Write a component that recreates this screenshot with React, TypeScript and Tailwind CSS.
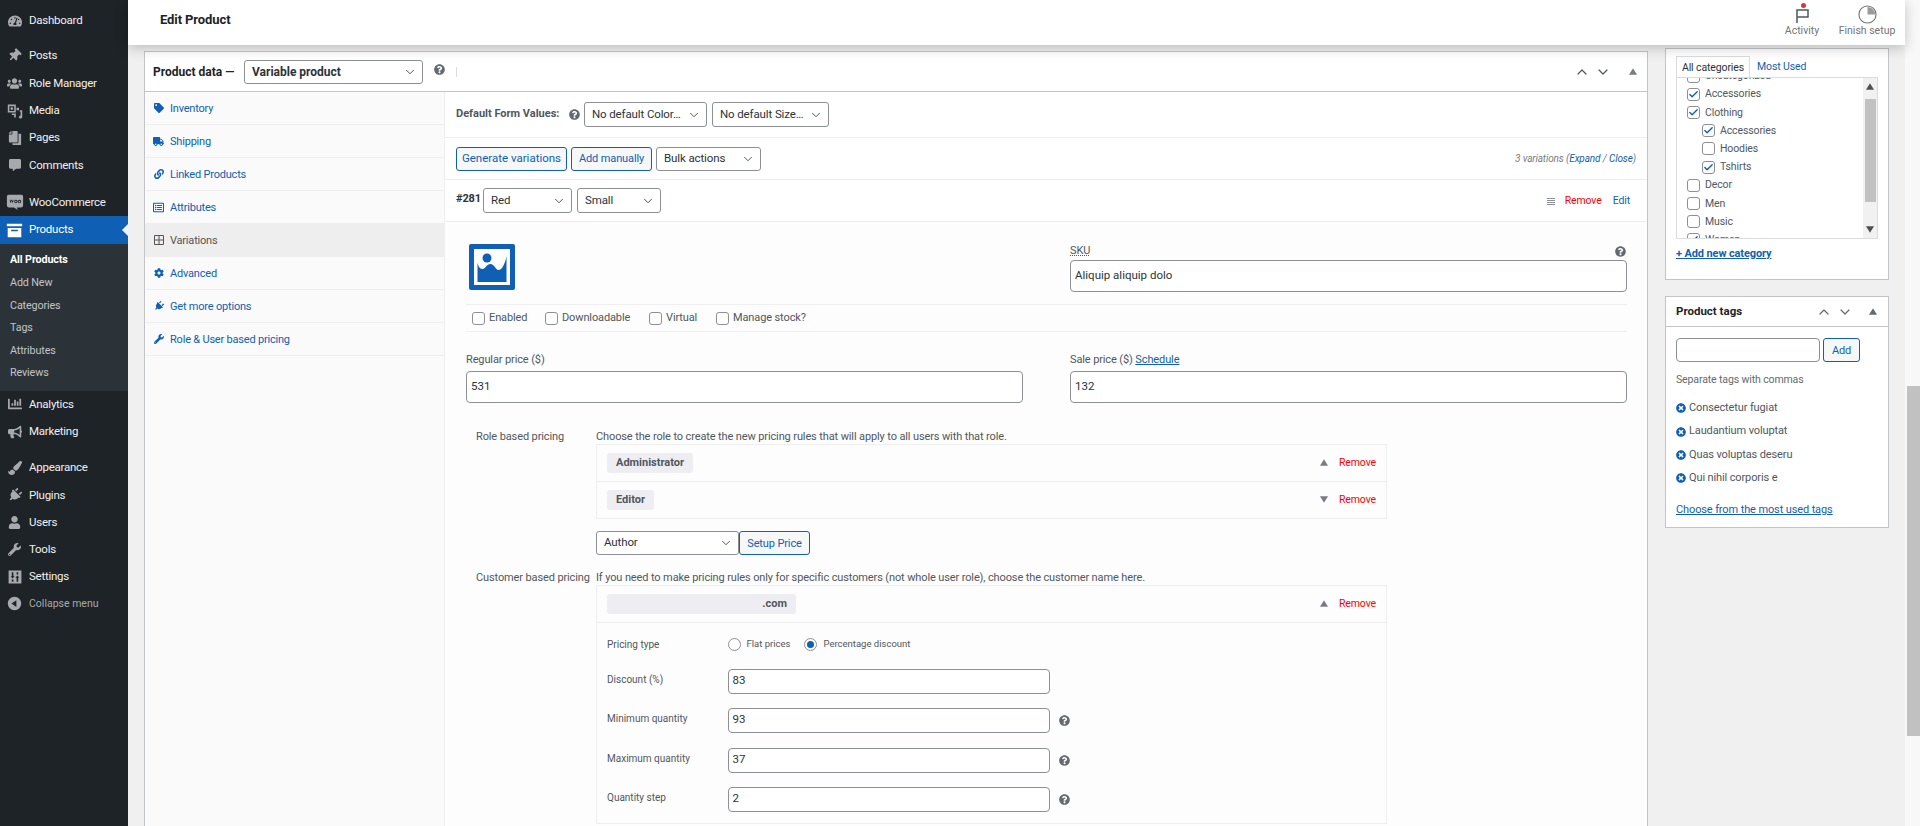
import React from 'react';
import { FaTachometerAlt, FaThumbtack, FaUsers, FaCopy, FaCommentAlt, FaChartBar, FaBullhorn, FaPaintBrush, FaPlug, FaUser, FaWrench, FaTag, FaTruck, FaLink, FaRegListAlt, FaCog, FaQuestionCircle, FaTimesCircle } from 'react-icons/fa';
import { ChevronDown, ChevronUp, Check } from 'lucide-react';

const font = 'font-["Roboto",sans-serif]';

const Tri = ({ down = false, cls = '' }: { down?: boolean; cls?: string }) => (
  <svg viewBox="0 0 10 8" className={`w-[8px] h-[7px] ${cls}`} fill="currentColor">
    <path d={down ? 'M0 0h10L5 8z' : 'M5 0l5 8H0z'} />
  </svg>
);

const Help = ({ cls = '' }: { cls?: string }) => <FaQuestionCircle className={`w-[11px] h-[11px] text-[#646970] ${cls}`} />;

const MediaIcon = () => (
  <svg viewBox="0 0 20 20" className="w-[16px] h-[16px]" fill="currentColor">
    <path d="M1 2h10v10H1zM3 4v6h6V4zM6 5.2a1.8 1.8 0 1 1 0 3.6 1.8 1.8 0 0 1 0-3.6zM12 6h3v3h-3zM6 13h5v5H9v-3H6zM16 9h3v8.500a2 2 0 1 1-2-2V11h-1z" fillRule="evenodd" />
  </svg>
);

const ArchiveIcon = () => (
  <svg viewBox="0 0 20 20" className="w-[17px] h-[17px]" fill="currentColor">
    <path d="M1 2h18v3H1zM2 7h16v11H2zM6 9v2h8V9z" fillRule="evenodd" />
  </svg>
);

const WooIcon = () => (
  <svg viewBox="0 0 20 20" className="w-[18px] h-[18px]" fill="currentColor">
    <path d="M3 2h14a2 2 0 0 1 2 2v10a2 2 0 0 1-2 2h-5l1 3-4-3H3a2 2 0 0 1-2-2V4a2 2 0 0 1 2-2zM4 7.500l1 4 1.300-3 1.200 3 1-4H7.600l-.3 1.800L6.500 7.500h-.4L5.300 9.300 5 7.500zM11 7.500a1.900 1.900 0 1 0 .01 0zM11 8.500a.9.9 0 1 1-.01 0zM15 7.500a1.900 1.900 0 1 0 .01 0zM15 8.500a.9.9 0 1 1-.01 0z" fillRule="evenodd" />
  </svg>
);

const SettingsIcon = () => (
  <svg viewBox="0 0 20 20" className="w-[16px] h-[16px]" fill="currentColor">
    <path d="M2 2h16v16H2zM6 4v5H4.500L7 12l2.500-3H8V4zM6 13v3h2v-3zM12 4v3h2V4zM13 8l-2.500 3H12v5h2v-5h1.500z" fillRule="evenodd" />
  </svg>
);

const CollapseIcon = () => (
  <svg viewBox="0 0 20 20" className="w-[15px] h-[15px]" fill="currentColor">
    <path d="M10 1a9 9 0 1 1 0 18 9 9 0 0 1 0-18zM12.500 5.500L6 10l6.500 4.500z" fillRule="evenodd" />
  </svg>
);

const GridIcon = () => (
  <svg viewBox="0 0 10 10" className="w-[10px] h-[10px]" fill="none" stroke="currentColor" strokeWidth="1">
    <path d="M.5.500h9v9h-9zM5 .5v9M.5 5h9" />
  </svg>
);

const ImageHolder = () => (
  <div className="w-[46px] h-[46px] rounded-[2px] bg-[#0f5fb5] p-[5px]">
    <div className="w-full h-full bg-white p-[2px]">
      <svg viewBox="0 0 32 32" className="w-full h-full" fill="#0f5fb5">
        <circle cx="11" cy="7" r="4.500" />
        <path d="M1.500 12c1 3 2 6 5 6 3 0 4-5 8-5 4 0 5 6 8 6 4 0 7-8 8-14v26H1.500z" />
      </svg>
    </div>
  </div>
);

const Select = ({ label, cls }: { label: string; cls: string }) => (
  <div className={`flex items-center justify-between bg-white border border-[#8c8f94] rounded-[3px] pl-[7px] pr-[5px] text-[#2c3338] text-[11.500px] ${cls}`}>
    <span className="whitespace-nowrap">{label}</span>
    <ChevronDown className="w-[14px] h-[14px] shrink-0 text-[#50575e]" strokeWidth={1.7} />
  </div>
);

const Btn = ({ label, cls }: { label: string; cls: string }) => (
  <div className={`flex items-center justify-center bg-[#f6f7f7] border border-[#0f5fb5] rounded-[3px] text-[#0f5fb5] leading-none ${cls}`}>{label}</div>
);

const Field = ({ value, cls }: { value: string; cls: string }) => (
  <div className={`flex items-center bg-white border border-[#8c8f94] rounded-[4px] px-[4px] text-[#2c3338] text-[11.500px] tracking-normal leading-none ${cls}`}>{value}</div>
);

const Box = ({ checked = false }: { checked?: boolean }) => (
  <span className="flex items-center justify-center w-[13px] h-[13px] shrink-0 bg-white border border-[#8c8f94] rounded-[3px]">
    {checked && <Check className="w-[11px] h-[11px] text-[#0f5fb5]" strokeWidth={3} />}
  </span>
);

const MenuItem = ({ icon, label, cls = '' }: { icon: React.ReactNode; label: string; cls?: string }) => (
  <div className={`flex items-center h-[27.3px] text-[#f0f0f1] text-[11.500px] tracking-[-0.25px] ${cls}`}>
    <span className="flex justify-center w-[29px] text-[#a7aaad]">{icon}</span>
    <span>{label}</span>
  </div>
);

const Sub = ({ label, bold = false }: { label: string; bold?: boolean }) => (
  <div className={`flex items-center h-[22.6px] pl-[10px] text-[10.750px] ${bold ? 'font-bold text-white' : 'text-[#c3c4c7]'}`}>{label}</div>
);

const Sidebar = () => (
  <aside className="w-[128px] shrink-0 bg-[#1d2327] flex flex-col pt-[7px]">
    <MenuItem icon={<FaTachometerAlt className="w-[14px] h-[14px]" />} label="Dashboard" />
    <div className="h-[8px]" />
    <MenuItem icon={<FaThumbtack className="w-[13px] h-[13px] rotate-45" />} label="Posts" />
    <MenuItem icon={<FaUsers className="w-[15px] h-[15px]" />} label="Role Manager" />
    <MenuItem icon={<MediaIcon />} label="Media" />
    <MenuItem icon={<FaCopy className="w-[14px] h-[14px] -scale-x-100" />} label="Pages" />
    <MenuItem icon={<FaCommentAlt className="w-[12px] h-[12px]" />} label="Comments" />
    <div className="h-[10px]" />
    <MenuItem icon={<WooIcon />} label="WooCommerce" />
    <div className="relative flex items-center h-[28px] bg-[#0f5fb5] text-white text-[11.500px] tracking-[-0.25px]">
      <span className="flex justify-center w-[29px] text-white"><ArchiveIcon /></span>
      <span>Products</span>
      <span className="absolute right-0 top-[8px] border-y-[6px] border-y-transparent border-r-[6px] border-r-[#f0f0f1]" />
    </div>
    <div className="bg-[#2c3338] pt-[5px] pb-[6px]">
      <Sub label="All Products" bold />
      <Sub label="Add New" />
      <Sub label="Categories" />
      <Sub label="Tags" />
      <Sub label="Attributes" />
      <Sub label="Reviews" />
    </div>
    <MenuItem icon={<FaChartBar className="w-[14px] h-[14px]" />} label="Analytics" />
    <MenuItem icon={<FaBullhorn className="w-[14px] h-[14px]" />} label="Marketing" />
    <div className="h-[9px]" />
    <MenuItem icon={<FaPaintBrush className="w-[14px] h-[14px]" />} label="Appearance" />
    <MenuItem icon={<FaPlug className="w-[14px] h-[14px] rotate-45" />} label="Plugins" />
    <MenuItem icon={<FaUser className="w-[13px] h-[13px]" />} label="Users" />
    <MenuItem icon={<FaWrench className="w-[13px] h-[13px]" />} label="Tools" />
    <MenuItem icon={<SettingsIcon />} label="Settings" />
    <div className="flex items-center h-[26px] text-[#a7aaad] text-[10.500px] tracking-normal">
      <span className="flex justify-center w-[29px]"><CollapseIcon /></span>
      <span>Collapse menu</span>
    </div>
  </aside>
);

const Header = () => (
  <header className="relative z-10 flex items-start justify-between h-[45px] bg-white shadow-[0_3px_12px_rgba(0,0,0,0.22)] pl-[32px] pr-[9px]">
    <h1 className="mt-[12px] text-[13px] tracking-[-0.1px] leading-[16px] font-bold text-[#1d2327]">Edit Product</h1>
    <div className="flex gap-[17px] mt-[5px] text-[#757575] text-[10.500px] tracking-normal whitespace-nowrap">
      <div className="flex flex-col items-center w-[38px]">
        <span className="relative h-[18px]">
          <svg viewBox="0 0 13 16" className="w-[13px] h-[16px] mt-[2px]" fill="none" stroke="#50575e" strokeWidth="1.500">
            <path d="M1 16V3h11v7H1" />
          </svg>
          <span className="absolute -top-[2px] left-[5px] w-[5px] h-[5px] rounded-full bg-[#d63638]" />
        </span>
        <span className="leading-[13px] mt-[1px]">Activity</span>
      </div>
      <div className="flex flex-col items-center w-[58px]">
        <svg viewBox="0 0 20 20" className="w-[19px] h-[19px]" fill="none" stroke="#757575" strokeWidth="1.200">
          <circle cx="10" cy="10" r="9" />
          <path d="M10 2v8h8a8 8 0 0 0-8-8z" fill="#9a9a9a" stroke="none" />
        </svg>
        <span className="leading-[13px]">Finish setup</span>
      </div>
    </div>
  </header>
);

const Tab = ({ icon, label, active = false }: { icon: React.ReactNode; label: string; active?: boolean }) => (
  <div className={`flex items-center h-[33px] border-b border-[#eeeeee] pl-[8px] text-[11px] tracking-[-0.2px] ${active ? 'bg-[#eeeeee] text-[#555555]' : 'text-[#0f5fb5]'}`}>
    <span className="flex justify-center w-[11px] mr-[6px]">{icon}</span>
    <span className="pt-[2px]">{label}</span>
  </div>
);

const ProductTabs = () => (
  <div className="w-[300px] shrink-0 bg-[#fafafa] border-r border-[#eeeeee]">
    <Tab icon={<FaTag className="w-[10px] h-[10px]" />} label="Inventory" />
    <Tab icon={<FaTruck className="w-[11px] h-[11px]" />} label="Shipping" />
    <Tab icon={<FaLink className="w-[10px] h-[10px]" />} label="Linked Products" />
    <Tab icon={<FaRegListAlt className="w-[11px] h-[11px]" />} label="Attributes" />
    <Tab icon={<GridIcon />} label="Variations" active />
    <Tab icon={<FaCog className="w-[10px] h-[10px]" />} label="Advanced" />
    <Tab icon={<FaPlug className="w-[10px] h-[10px] rotate-45" />} label="Get more options" />
    <Tab icon={<FaWrench className="w-[10px] h-[10px]" />} label="Role & User based pricing" />
  </div>
);

const Check2 = ({ label, cls }: { label: string; cls: string }) => (
  <label className={`flex items-center gap-[4px] text-[11px] text-[#50575e] ${cls}`}>
    <Box />
    <span>{label}</span>
  </label>
);

const RoleRow = ({ label, down = false, border = true }: { label: string; down?: boolean; border?: boolean }) => (
  <div className={`flex items-center justify-between h-[36.500px] pl-[10px] pr-[10px] ${border ? 'border-b border-[#eeeeee]' : ''}`}>
    <span className="flex items-center h-[20px] px-[9px] rounded-[3px] bg-[#eeeef2] text-[11px] tracking-normal font-bold text-[#50575e]">{label}</span>
    <span className="flex items-center gap-[11px]">
      <Tri down={down} cls="text-[#787c82]" />
      <span className="text-[10.500px] text-[#ff0000]">Remove</span>
    </span>
  </div>
);

const PriceRow = ({ label, value, help = true, mt }: { label: string; value: string; help?: boolean; mt: string }) => (
  <div className={`flex items-center ${mt}`}>
    <span className="w-[120.500px] text-[10px] tracking-normal text-[#50575e] -translate-y-[2px]">{label}</span>
    <Field value={value} cls="w-[322px] h-[25px]" />
    {help && <Help cls="ml-[9px]" />}
  </div>
);

const Radio = ({ on = false }: { on?: boolean }) => (
  <span className="flex items-center justify-center w-[13px] h-[13px] shrink-0 rounded-full bg-white border border-[#8c8f94]">
    {on && <span className="w-[7px] h-[7px] rounded-full bg-[#0f5fb5]" />}
  </span>
);

const Variations = () => (
  <div className="flex-1 min-w-0 bg-white">
    <div className="flex items-center h-[46px] pl-[11px] border-b border-[#eeeeee]">
      <span className="w-[113px] text-[11px] tracking-normal font-bold text-[#50575e] whitespace-nowrap">Default Form Values:</span>
      <Help />
      <Select label="No default Color…" cls="ml-[4px] w-[123px] h-[25px]" />
      <Select label="No default Size…" cls="ml-[5px] w-[117px] h-[25px]" />
    </div>
    <div className="flex items-center h-[42px] pl-[11px] pr-[11px] border-b border-[#eeeeee]">
      <Btn label="Generate variations" cls="w-[111px] h-[24px] text-[11.500px] tracking-normal" />
      <Btn label="Add manually" cls="ml-[4px] w-[81px] h-[24px] text-[11px]" />
      <Select label="Bulk actions" cls="ml-[4px] w-[105px] h-[24px]" />
      <span className="ml-auto text-[10px] italic text-[#787c82]">
        3 variations (<span className="text-[#0f5fb5]">Expand</span> / <span className="text-[#0f5fb5]">Close</span>)
      </span>
    </div>
    <div className="flex items-center h-[42px] pl-[11px] pr-[17px] border-b border-[#eeeeee]">
      <span className="w-[27px] text-[11px] font-bold text-[#2c3338] -translate-y-[1px]">#281</span>
      <Select label="Red" cls="w-[89px] h-[25px]" />
      <Select label="Small" cls="ml-[5px] w-[84px] h-[25px]" />
      <div className="ml-auto flex items-center text-[10.500px]">
        <span className="flex flex-col gap-[1px] w-[8px] mr-[10px] mt-[2px]">
          <span className="h-px bg-[#8c8f94]" />
          <span className="h-px bg-[#8c8f94]" />
          <span className="h-px bg-[#8c8f94]" />
          <span className="h-px bg-[#8c8f94]" />
        </span>
        <span className="text-[#ff0000]">Remove</span>
        <span className="ml-[11px] text-[#0f5fb5]">Edit</span>
      </div>
    </div>
    <div className="bg-[#fdfdfd] pl-[21px] pr-[20px] h-[700px]">
      <div className="flex justify-between">
        <div className="pl-[3px] pt-[22px]"><ImageHolder /></div>
        <div className="w-[557px] pt-[20px]">
          <div className="flex justify-between items-center h-[18px] text-[11px] text-[#50575e]">
            <span className="underline decoration-dotted">SKU</span>
            <Help cls="mr-[1px]" />
          </div>
          <Field value="Aliquip aliquip dolo" cls="h-[32px] w-full" />
        </div>
      </div>
      <div className="flex items-center h-[28px] mt-[12px] border-y border-[#eeeeee]">
        <Check2 label="Enabled" cls="ml-[6px] w-[73px]" />
        <Check2 label="Downloadable" cls="w-[104px]" />
        <Check2 label="Virtual" cls="w-[67px]" />
        <Check2 label="Manage stock?" cls="" />
      </div>
      <div className="flex justify-between mt-[20px]">
        <div className="w-[557px]">
          <div className="h-[19px] text-[11px] text-[#50575e]">Regular price ($)</div>
          <Field value="531" cls="h-[32px] w-full" />
        </div>
        <div className="w-[557px]">
          <div className="h-[19px] text-[11px] text-[#50575e]">Sale price ($) <span className="text-[#0f5fb5] underline">Schedule</span></div>
          <Field value="132" cls="h-[32px] w-full" />
        </div>
      </div>
      <div className="flex mt-[26px] text-[11px] text-[#50575e]">
        <span className="w-[130px] pl-[10px]">Role based pricing</span>
        <div className="w-[791px]">
          <div className="h-[15px] leading-[15px]">Choose the role to create the new pricing rules that will apply to all users with that role.</div>
          <div className="border border-[#eeeeee]">
            <RoleRow label="Administrator" />
            <RoleRow label="Editor" down border={false} />
          </div>
          <div className="flex mt-[12px]">
            <Select label="Author" cls="w-[143px] h-[24px]" />
            <Btn label="Setup Price" cls="w-[71px] h-[24px] text-[11px]" />
          </div>
        </div>
      </div>
      <div className="flex mt-[15px] text-[11px] text-[#50575e]">
        <span className="w-[130px] pl-[10px] whitespace-nowrap">Customer based pricing</span>
        <div className="w-[791px]">
          <div className="h-[15px] leading-[15px]">If you need to make pricing rules only for specific customers (not whole user role), choose the customer name here.</div>
          <div className="border border-[#eeeeee] h-[239px]">
            <div className="flex items-center justify-between h-[36.500px] px-[10px] border-b border-[#eeeeee]">
              <span className="flex items-center justify-end w-[189px] h-[20px] pr-[9px] rounded-[3px] bg-[#eeeef2] text-[11px] tracking-normal font-bold text-[#50575e]">.com</span>
              <span className="flex items-center gap-[11px]">
                <Tri cls="text-[#787c82]" />
                <span className="text-[10.500px] text-[#ff0000]">Remove</span>
              </span>
            </div>
            <div className="pl-[10px]">
              <div className="flex items-center mt-[14px] text-[9.500px] tracking-normal">
                <span className="w-[120.500px] text-[10px]">Pricing type</span>
                <Radio />
                <span className="ml-[6px]">Flat prices</span>
                <span className="ml-[14px]"><Radio on /></span>
                <span className="ml-[6px]">Percentage discount</span>
              </div>
              <PriceRow label="Discount (%)" value="83" help={false} mt="mt-[17px]" />
              <PriceRow label="Minimum quantity" value="93" mt="mt-[14px]" />
              <PriceRow label="Maximum quantity" value="37" mt="mt-[15px]" />
              <PriceRow label="Quantity step" value="2" mt="mt-[14px]" />
            </div>
          </div>
        </div>
      </div>
    </div>
  </div>
);

const ProductData = () => (
  <section className="w-[1504px] ml-[16px] mt-[6px] bg-white border border-[#c3c4c7] h-[900px]">
    <div className="flex items-center h-[40px] pl-[8px] pr-[10px] border-b border-[#c3c4c7]">
      <span className="w-[91px] text-[12px] tracking-normal font-bold text-[#1d2327] whitespace-nowrap">Product data —</span>
      <div className="flex items-center justify-between w-[179px] h-[24px] bg-white border border-[#8c8f94] rounded-[3px] pl-[7px] pr-[5px] text-[12px] tracking-normal font-bold text-[#2c3338]">
        <span>Variable product</span>
        <ChevronDown className="w-[14px] h-[14px] text-[#50575e]" strokeWidth={1.7} />
      </div>
      <Help cls="ml-[11px] -translate-y-[2px]" />
      <span className="ml-[11px] w-px h-[10px] bg-[#dcdcde]" />
      <div className="ml-auto flex items-center gap-[5px] text-[#50575e]">
        <ChevronUp className="w-[16px] h-[16px]" strokeWidth={1.8} />
        <ChevronDown className="w-[16px] h-[16px]" strokeWidth={1.8} />
        <Tri cls="ml-[13px] text-[#787c82]" />
      </div>
    </div>
    <div className="flex">
      <ProductTabs />
      <Variations />
    </div>
  </section>
);

const CatRow = ({ label, checked = false, child = false }: { label: string; checked?: boolean; child?: boolean }) => (
  <div className={`flex items-center h-[18.200px] gap-[5px] text-[10.500px] text-[#50575e] ${child ? 'pl-[25px]' : 'pl-[10px]'}`}>
    <Box checked={checked} />
    <span>{label}</span>
  </div>
);

const Categories = () => (
  <section className="h-[232px] bg-white border border-[#c3c4c7] px-[10px]">
    <div className="flex items-end h-[29px] text-[10.500px]">
      <div className="flex items-center justify-center w-[74px] h-[22px] border border-b-0 border-[#dcdcde] text-[#2c3338]">All categories</div>
      <div className="ml-[7px] flex items-center h-[22px] text-[#0f5fb5]">Most Used</div>
    </div>
    <div className="flex h-[162px] border border-[#dcdcde] -mt-px overflow-hidden">
      <div className="flex-1 -mt-[11px] overflow-hidden">
        <CatRow label="Uncategorized" />
        <CatRow label="Accessories" checked />
        <CatRow label="Clothing" checked />
        <CatRow label="Accessories" checked child />
        <CatRow label="Hoodies" child />
        <CatRow label="Tshirts" checked child />
        <CatRow label="Decor" />
        <CatRow label="Men" />
        <CatRow label="Music" />
        <CatRow label="Women" checked />
      </div>
      <div className="flex flex-col items-center w-[14px] bg-[#f1f1f1] text-[#505050]">
        <Tri cls="mt-[5px]" />
        <div className="w-[11px] h-[103px] mt-[9px] bg-[#c1c1c1]" />
        <Tri down cls="mt-auto mb-[5px]" />
      </div>
    </div>
    <div className="mt-[7px] text-[11px] font-bold text-[#0f5fb5] underline">+ Add new category</div>
  </section>
);

const TagItem = ({ label }: { label: string }) => (
  <div className="flex items-center gap-[3px] h-[23.300px] text-[11px] text-[#50575e]">
    <FaTimesCircle className="w-[10px] h-[10px] text-[#0f5fb5]" />
    <span>{label}</span>
  </div>
);

const ProductTags = () => (
  <section className="h-[232px] mt-[16px] bg-white border border-[#c3c4c7]">
    <div className="flex items-center h-[30px] pl-[10px] pr-[11px] border-b border-[#c3c4c7]">
      <span className="text-[11.500px] tracking-normal font-bold text-[#1d2327]">Product tags</span>
      <div className="ml-auto flex items-center gap-[5px] text-[#646970]">
        <ChevronUp className="w-[16px] h-[16px]" strokeWidth={1.8} />
        <ChevronDown className="w-[16px] h-[16px]" strokeWidth={1.8} />
        <Tri cls="ml-[11px]" />
      </div>
    </div>
    <div className="px-[10px] pt-[11px]">
      <div className="flex gap-[3px]">
        <div className="w-[144px] h-[24px] bg-white border border-[#8c8f94] rounded-[4px]" />
        <Btn label="Add" cls="w-[37px] h-[24px] text-[11px]" />
      </div>
      <div className="mt-[10px] text-[10.500px] text-[#646970]">Separate tags with commas</div>
      <div className="mt-[9px]">
        <TagItem label="Consectetur fugiat" />
        <TagItem label="Laudantium voluptat" />
        <TagItem label="Quas voluptas deseru" />
        <TagItem label="Qui nihil corporis e" />
      </div>
      <div className="mt-[12px] text-[11px] text-[#0f5fb5] underline">Choose from the most used tags</div>
    </div>
  </section>
);

export default function App() {
  return (
    <div className={`flex w-[1920px] h-[826px] overflow-hidden bg-[#f0f0f1] tracking-[-0.12px] ${font}`}>
      <Sidebar />
      <div className="flex flex-col w-[1777px] shrink-0">
        <Header />
        <div className="flex flex-1 min-h-0">
          <ProductData />
          <aside className="w-[224px] ml-[17px] mt-[3px]">
            <Categories />
            <ProductTags />
          </aside>
        </div>
      </div>
      <div className="w-[15px] shrink-0 bg-[#f8f8f8] pl-[2px] pt-[386px]">
        <div className="h-[350px] bg-[#c1c1c1]" />
      </div>
    </div>
  );
}
